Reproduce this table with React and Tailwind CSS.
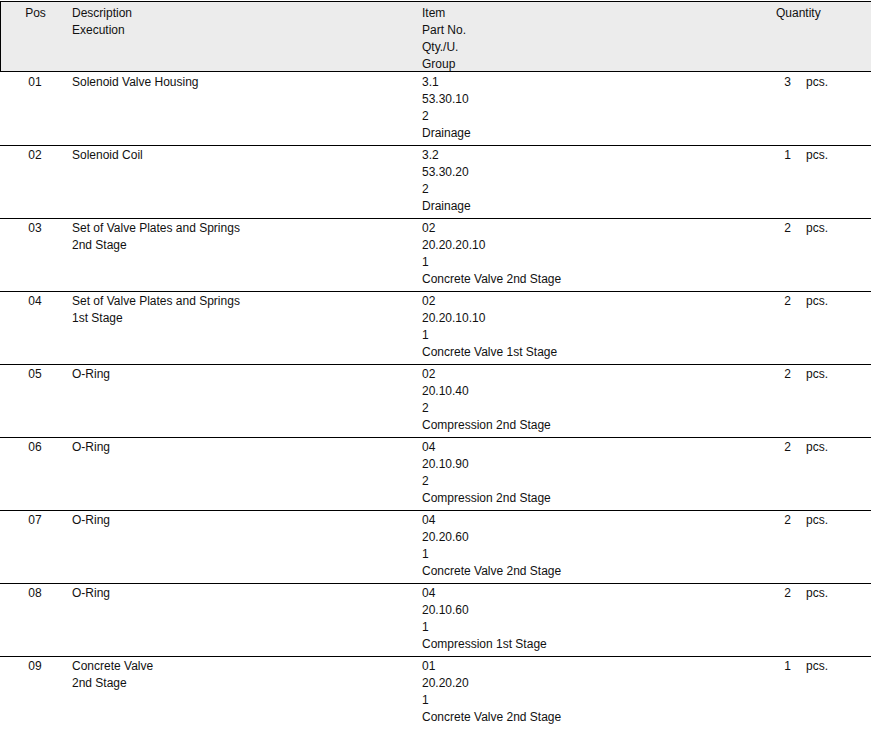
import React from "react";

const rows = [
  { pos: "01", desc: ["Solenoid Valve Housing"], item: ["3.1", "53.30.10", "2", "Drainage"], qty: "3" },
  { pos: "02", desc: ["Solenoid Coil"], item: ["3.2", "53.30.20", "2", "Drainage"], qty: "1" },
  { pos: "03", desc: ["Set of Valve Plates and Springs", "2nd Stage"], item: ["02", "20.20.20.10", "1", "Concrete Valve 2nd Stage"], qty: "2" },
  { pos: "04", desc: ["Set of Valve Plates and Springs", "1st Stage"], item: ["02", "20.20.10.10", "1", "Concrete Valve 1st Stage"], qty: "2" },
  { pos: "05", desc: ["O-Ring"], item: ["02", "20.10.40", "2", "Compression 2nd Stage"], qty: "2" },
  { pos: "06", desc: ["O-Ring"], item: ["04", "20.10.90", "2", "Compression 2nd Stage"], qty: "2" },
  { pos: "07", desc: ["O-Ring"], item: ["04", "20.20.60", "1", "Concrete Valve 2nd Stage"], qty: "2" },
  { pos: "08", desc: ["O-Ring"], item: ["04", "20.10.60", "1", "Compression 1st Stage"], qty: "2" },
  { pos: "09", desc: ["Concrete Valve", "2nd Stage"], item: ["01", "20.20.20", "1", "Concrete Valve 2nd Stage"], qty: "1" },
];

function Lines({ lines }) {
  return (
    <div className="flex flex-col">
      {lines.map((l, i) => (
        <div key={i} className="h-[17px] leading-[17px] whitespace-nowrap">{l}</div>
      ))}
    </div>
  );
}

export default function App() {
  return (
    <div
      className="w-[871px] h-[739px] bg-white text-[12px] text-[#111] pt-[1px] overflow-hidden"
      style={{ fontFamily: '"Liberation Sans", Arial, sans-serif' }}
    >
      <div className="flex h-[71px] border-t border-b border-l border-black bg-[#ececec] pt-[3px]">
        <div className="w-[69px] text-center h-[17px] leading-[17px]">Pos</div>
        <div className="w-[352px] pl-[2px]">
          <Lines lines={["Description", "Execution"]} />
        </div>
        <div className="w-[354px]">
          <Lines lines={["Item", "Part No.", "Qty./U.", "Group"]} />
        </div>
        <div className="h-[17px] leading-[17px]">Quantity</div>
      </div>
      <div className="mt-[1px]">
        {rows.map((r, i) => (
          <div
            key={r.pos}
            className={
              "flex h-[73px] pt-[1px] " + (i < rows.length - 1 ? "border-b border-black" : "")
            }
          >
            <div className="w-[70px] text-center h-[17px] leading-[17px]">{r.pos}</div>
            <div className="w-[352px] pl-[2px]">
              <Lines lines={r.desc} />
            </div>
            <div className="w-[349px]">
              <Lines lines={r.item} />
            </div>
            <div className="flex h-[17px] leading-[17px]">
              <span className="w-[20px] text-right">{r.qty}</span>
              <span className="ml-[15px]">pcs.</span>
            </div>
          </div>
        ))}
      </div>
    </div>
  );
}
